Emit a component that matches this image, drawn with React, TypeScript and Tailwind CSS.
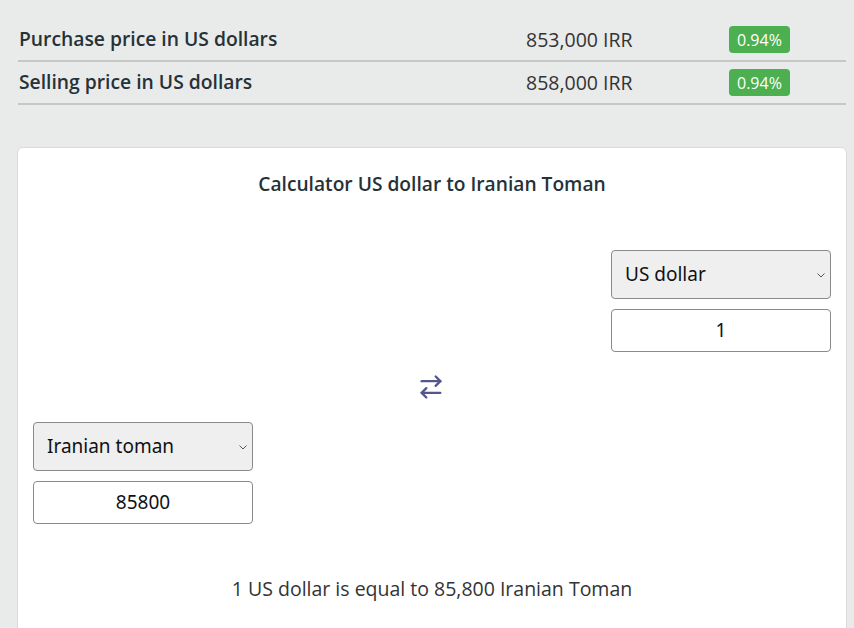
import { ArrowRightLeft } from 'lucide-react';

const rows = [
    { label: 'Purchase price in US dollars', value: '853,000 IRR', change: '0.94%' },
    { label: 'Selling price in US dollars', value: '858,000 IRR', change: '0.94%' },
];

function Select({ value }: { value: string }) {
    return (
        <div className="relative w-[220px] h-[49px] rounded-[4px] border border-[#8a8a8a] bg-[#efefef] flex items-center pl-[13px] text-[19px] text-[#111]" style={{ fontFamily: '"Noto Sans", sans-serif' }}>
            <span>{value}</span>
            <svg className="absolute right-[4px] top-[20px] w-[10px] h-[8px]" viewBox="0 0 10 8" fill="none" stroke="#555" strokeWidth={1}>
                <path d="M1.5 2.5l3.5 3.5 3.5-3.5" />
            </svg>
        </div>
    );
}

function Amount({ value }: { value: string }) {
    return (
        <div className="w-[220px] h-[43px] rounded-[4px] border border-[#8a8a8a] bg-white flex items-center justify-center text-[19px] text-[#111]" style={{ fontFamily: '"Noto Sans", sans-serif' }}>
            {value}
        </div>
    );
}

export default function App() {
    return (
        <div className="w-[854px] h-[628px] overflow-hidden bg-[#e9eaea] text-[#253238]" style={{ fontFamily: '"Open Sans", sans-serif' }}>
            {/* Price table */}
            <div className="ml-[18px] w-[828px] pt-[19px]">
                {rows.map((r) => (
                    <div key={r.label} className="h-[43px] flex items-center border-b-2 border-[#c6c8c8]">
                        <span className="w-[508px] pl-[1px] text-[19.3px] font-semibold">{r.label}</span>
                        <span className="w-[203px] text-[19.5px] text-[#333]">{r.value}</span>
                        <span className="h-[27px] px-[8px] rounded-[4px] bg-[#4caf50] text-white text-[16px] flex items-center">{r.change}</span>
                    </div>
                ))}
            </div>

            {/* Calculator card */}
            <div className="ml-[17px] mt-[42px] w-[830px] h-[520px] bg-white border border-[#d9dbdb] rounded-[6px] px-[15px]">
                <h2 className="pt-[22px] text-center text-[19.2px] font-semibold">Calculator US dollar to Iranian Toman</h2>

                <div className="mt-[51px] flex flex-col items-end gap-[10px]">
                    <Select value="US dollar" />
                    <Amount value="1" />
                </div>

                <div className="h-[70px] flex items-center justify-center">
                    <ArrowRightLeft className="w-[28px] h-[28px] text-[#56568f] -ml-[2px]" strokeWidth={2} />
                </div>

                <div className="flex flex-col items-start gap-[10px]">
                    <Select value="Iranian toman" />
                    <Amount value="85800" />
                </div>

                <p className="mt-[50px] text-center text-[19.5px] text-[#333]">1 US dollar is equal to 85,800 Iranian Toman</p>
            </div>
        </div>
    );
}
